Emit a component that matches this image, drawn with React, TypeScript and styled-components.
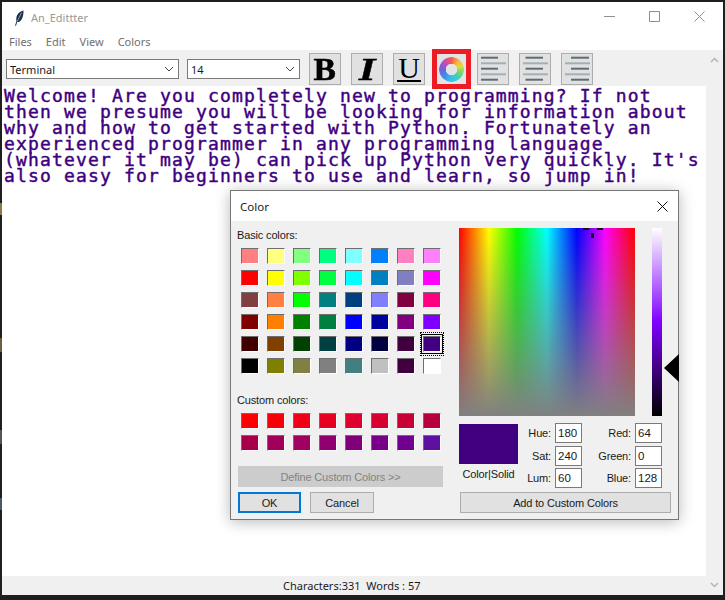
import React from "react";
import styled, { createGlobalStyle } from "styled-components";

const UI_FONT = `"Noto Sans", "Liberation Sans", Arial, sans-serif`;
const DIALOG_FONT = `"Liberation Sans", Arial, sans-serif`;

const GlobalStyle = createGlobalStyle`
  html, body {
    margin: 0;
    padding: 0;
    background: #1f1f1f;
  }
  body {
    font-family: ${UI_FONT};
    font-size: 11px;
    color: #1a1a1a;
  }
`;

const Frame = styled.div`
  position: relative;
  box-sizing: border-box;
  width: 725px;
  height: 600px;
  padding: 2px 2px 5px 2px;
  display: flex;
  flex-direction: column;
  background-color: #1f1f1f;
  background-image: linear-gradient(
    to bottom,
    transparent 203px,
    #8a7a4a 203px,
    #8a7a4a 215px,
    transparent 215px,
    transparent 338px,
    #6a5f3f 338px,
    #6a5f3f 352px,
    transparent 352px,
    transparent 430px,
    #555 430px,
    #555 444px,
    transparent 444px,
    transparent 498px,
    #46586a 498px,
    #46586a 510px,
    transparent 510px
  );
  background-size: 2px 100%;
  background-repeat: no-repeat;
  overflow: hidden;
`;

const TitleBar = styled.div`
  height: 31px;
  display: flex;
  align-items: center;
  background: #fff;
  padding-left: 11px;
  flex: none;
`;

const TitleText = styled.span`
  margin-left: 6px;
  font-size: 11px;
  color: #999;
`;

const WindowButtons = styled.div`
  margin: -2px 18px 0 auto;
  display: flex;
  align-items: center;
  gap: 34px;
  color: #8f8f8f;
`;

const MenuBar = styled.div`
  height: 17px;
  display: flex;
  align-items: center;
  padding-left: 7px;
  gap: 14px;
  background: #fff;
  color: #6f6f6f;
  font-size: 11px;
  flex: none;
`;

const Workspace = styled.div`
  flex: 1;
  display: flex;
  min-height: 0;
`;

const EditorColumn = styled.div`
  flex: 1;
  display: flex;
  flex-direction: column;
  min-width: 0;
`;

const Toolbar = styled.div`
  position: relative;
  z-index: 1;
  height: 36px;
  box-sizing: border-box;
  padding: 3px 0 0 4px;
  display: flex;
  align-items: flex-start;
  background: #f0f0f0;
  flex: none;
`;

const Combo = styled.div<{ $width: number; $gap: number }>`
  box-sizing: border-box;
  width: ${(p) => p.$width}px;
  height: 20px;
  margin: 6px ${(p) => p.$gap}px 0 0;
  padding: 0 4px 0 3px;
  display: flex;
  align-items: center;
  justify-content: space-between;
  background: #fff;
  border: 1px solid #7a7a7a;
  font-size: 11px;
`;

const ToolButton = styled.div<{ $gap?: number }>`
  box-sizing: border-box;
  width: 32px;
  height: 32px;
  margin-right: ${(p) => p.$gap ?? 10}px;
  display: flex;
  align-items: center;
  justify-content: center;
  background: #e1e1e1;
  border: 1px solid #adadad;
  color: #000;
  font-family: "Liberation Serif", "Times New Roman", serif;
  flex: none;
`;

const BoldGlyph = styled.span`
  font-size: 32px;
  font-weight: 700;
  line-height: 30px;
  -webkit-text-stroke: 0.5px #000;
  transform: scaleX(1.05);
`;

const ItalicGlyph = styled.span`
  font-size: 32px;
  font-weight: 700;
  font-style: italic;
  line-height: 30px;
  -webkit-text-stroke: 0.4px #000;
  transform: scaleX(1.35);
`;

const UnderlineGlyph = styled.span`
  font-size: 30px;
  line-height: 24px;
  padding: 0 1px;
  margin-top: -1px;
  border-bottom: 2px solid #000;
  height: 24px;
`;

const ColorButton = styled.div`
  box-sizing: border-box;
  width: 39px;
  height: 40px;
  margin: -4px 6px 0 -3px;
  display: flex;
  align-items: center;
  justify-content: center;
  background: #e1e3e4;
  border: 5px solid #ed1c24;
  flex: none;
`;

const ColorRing = styled.span`
  width: 25px;
  height: 25px;
  border-radius: 50%;
  background: conic-gradient(
    #f45a4a 0deg,
    #fbb53a 40deg,
    #d8dc3e 70deg,
    #7dd66a 105deg,
    #3fd0b8 140deg,
    #36bff0 185deg,
    #3f8fe8 225deg,
    #6c63d8 270deg,
    #c04cc0 315deg,
    #f45a4a 360deg
  );
  -webkit-mask: radial-gradient(circle, transparent 5.5px, #000 6px);
  mask: radial-gradient(circle, transparent 5.5px, #000 6px);
`;

const Editor = styled.div`
  flex: 1;
  box-sizing: border-box;
  padding: 2px 0 0 2px;
  background: #fff;
  color: #400080;
  font-family: "DejaVu Sans Mono", "Liberation Mono", monospace;
  font-size: 18px;
  font-weight: 400;
  letter-spacing: 1.16px;
  -webkit-text-stroke: 0.45px #400080;
  line-height: 16px;
  white-space: pre;
  overflow: hidden;
`;

const StatusBar = styled.div`
  height: 19px;
  box-sizing: border-box;
  padding-left: 281px;
  display: flex;
  align-items: center;
  background: #f0f0f0;
  font-size: 11px;
  white-space: pre;
  flex: none;
`;

const Scrollbar = styled.div`
  width: 17px;
  display: flex;
  flex-direction: column;
  align-items: center;
  justify-content: space-between;
  padding: 7px 0;
  background: #f0f0f0;
  color: #b4b4b4;
  flex: none;
`;

const Dialog = styled.div`
  position: absolute;
  left: 230px;
  top: 190px;
  box-sizing: border-box;
  width: 449px;
  height: 330px;
  background: #f0f0f0;
  border: 1px solid #767676;
  box-shadow: 0 2px 14px rgba(0, 0, 0, 0.28);
  color: #1a1a1a;
  font-family: ${DIALOG_FONT};
  letter-spacing: -0.15px;
`;

const DialogTitle = styled.div`
  height: 30px;
  box-sizing: border-box;
  padding: 0 10px 0 9px;
  display: flex;
  align-items: center;
  justify-content: space-between;
  background: #fff;
  font-family: ${UI_FONT};
  font-size: 11.5px;
  letter-spacing: 0;
  color: #222;
`;

const DialogBody = styled.div`
  display: flex;
  gap: 16px;
  padding: 7px 0 0 6px;
`;

const LeftColumn = styled.div`
  width: 206px;
  display: flex;
  flex-direction: column;
`;

const GroupLabel = styled.div<{ $top?: number }>`
  height: 14px;
  margin-top: ${(p) => p.$top ?? 0}px;
  line-height: 14px;
  font-size: 11px;
`;

const SwatchGrid = styled.div`
  margin-top: 6px;
  padding-left: 4px;
  display: grid;
  grid-template-columns: repeat(8, 18px);
  grid-auto-rows: 16px;
  column-gap: 8px;
  row-gap: 6px;
`;

const Swatch = styled.div<{ $color: string; $selected?: boolean }>`
  position: relative;
  box-sizing: border-box;
  background: ${(p) => p.$color};
  border-style: solid;
  border-width: 1px;
  border-color: #6e6e6e #fff #fff #6e6e6e;
  ${(p) =>
    p.$selected
      ? `outline: 1px solid #000; outline-offset: 1px;
         &::after {
           content: "";
           position: absolute;
           inset: -5px -4px;
           border: 1px dotted #000;
         }`
      : ""}
`;

const DialogButton = styled.div<{
  $width?: number;
  $disabled?: boolean;
  $primary?: boolean;
}>`
  box-sizing: border-box;
  width: ${(p) => (p.$width ? `${p.$width}px` : "100%")};
  height: 21px;
  display: flex;
  align-items: center;
  justify-content: center;
  font-size: 11px;
  background: ${(p) => (p.$disabled ? "#cccccc" : "#e1e1e1")};
  color: ${(p) => (p.$disabled ? "#838383" : "#1a1a1a")};
  border: ${(p) =>
    p.$primary
      ? "2px solid #0078d7"
      : p.$disabled
        ? "1px solid #cccccc"
        : "1px solid #adadad"};
`;

const DefineRow = styled.div`
  margin: 15px 0 5px 1px;
`;

const ActionRow = styled.div`
  display: flex;
  gap: 9px;
  margin-left: 1px;
`;

const RightColumn = styled.div`
  width: 212px;
  display: flex;
  flex-direction: column;
`;

const PickerRow = styled.div`
  display: flex;
  gap: 17px;
`;

const Spectrum = styled.div`
  position: relative;
  width: 176px;
  height: 188px;
  background:
    linear-gradient(to bottom, rgba(128, 128, 128, 0), #808080),
    linear-gradient(
      to right,
      #ff0000 0%,
      #ffff00 17%,
      #00ff00 33%,
      #00ffff 50%,
      #0000ff 67%,
      #ff00ff 83%,
      #ff0000 100%
    );
`;

const Crosshair = styled.svg`
  position: absolute;
  left: 124px;
  top: -1px;
`;

const LumBar = styled.div`
  position: relative;
  width: 10px;
  height: 188px;
  background: linear-gradient(to bottom, #ffffff 0%, #8000ff 50%, #400080 75%, #000000 100%);
`;

const LumArrow = styled.svg`
  position: absolute;
  left: 12px;
  top: 126px;
`;

const ValueRow = styled.div`
  display: grid;
  grid-template-columns: 59px 37px 27px 53px 27px;
  grid-template-rows: repeat(3, 20px);
  row-gap: 2.5px;
  margin-top: 7px;
  align-items: center;
`;

const PreviewCell = styled.div`
  grid-row: 1 / span 3;
  grid-column: 1;
  display: flex;
  flex-direction: column;
  align-items: center;
  align-self: start;
  padding-top: 1px;
`;

const Preview = styled.div`
  width: 59px;
  height: 40px;
  background: #400080;
`;

const PreviewLabel = styled.div`
  margin-top: 2px;
  font-size: 11px;
  line-height: 16px;
  white-space: nowrap;
`;

const FieldLabel = styled.label`
  padding-right: 4px;
  text-align: right;
  font-size: 11px;
  white-space: nowrap;
`;

const FieldInput = styled.input`
  box-sizing: border-box;
  width: 27px;
  height: 20px;
  padding: 0 2px;
  border: 1px solid #7a7a7a;
  border-radius: 0;
  background: #fff;
  color: #1a1a1a;
  font-family: ${DIALOG_FONT};
  font-size: 11.5px;
  outline: none;
`;

const AddRow = styled.div`
  margin: 4px 0 0 1px;
`;

const basicColors = [
  "#ff8080", "#ffff80", "#80ff80", "#00ff80", "#80ffff", "#0080ff", "#ff80c0", "#ff80ff",
  "#ff0000", "#ffff00", "#80ff00", "#00ff40", "#00ffff", "#0080c0", "#8080c0", "#ff00ff",
  "#804040", "#ff8040", "#00ff00", "#008080", "#004080", "#8080ff", "#800040", "#ff0080",
  "#800000", "#ff8000", "#008000", "#008040", "#0000ff", "#0000a0", "#800080", "#8000ff",
  "#400000", "#804000", "#004000", "#004040", "#000080", "#000040", "#400040", "#400080",
  "#000000", "#808000", "#808040", "#808080", "#408080", "#c0c0c0", "#400040", "#ffffff",
];

const customColors = [
  "#ff0000", "#f80008", "#f00018", "#e80020", "#e00030", "#d80030", "#c80038", "#b80040",
  "#a80048", "#a00058", "#a00060", "#900070", "#800078", "#780088", "#700090", "#6010a0",
];

const editorText = `Welcome! Are you completely new to programming? If not
then we presume you will be looking for information about
why and how to get started with Python. Fortunately an
experienced programmer in any programming language
(whatever it may be) can pick up Python very quickly. It's
also easy for beginners to use and learn, so jump in!`;

const Chevron = () => (
  <svg width="10" height="6" viewBox="0 0 10 6" fill="none" stroke="#444" strokeWidth="1">
    <path d="M1 1l4 4 4-4" />
  </svg>
);

const Feather = () => (
  <svg width="12" height="16" viewBox="0 0 12 16">
    <path d="M10.5 0.5C7.5 1 4.6 3 3.6 6.5c-.4 1.6-.5 3.4-.2 4.9L2 15.4l1 .3 1.2-3.6c2 .1 3.7-1 4.9-3.6 1-2.3 1.5-5.3 1.4-8z" fill="#1a2f4a" />
    <path d="M8.6 2.6L4.2 11.4" stroke="#a9bed2" strokeWidth=".8" />
  </svg>
);

type AlignKind = "left" | "center" | "right";

const AlignIcon = ({ kind }: { kind: AlignKind }) => {
  const shortLine = { left: [3, 20], center: [5.5, 23], right: [9, 27] }[kind];
  const longLine = [3, 28];
  return (
    <svg width="30" height="30" viewBox="0 0 30 30" strokeWidth="2">
      {[3.7, 14.7, 25.7].map((y) => (
        <path key={y} d={`M${shortLine[0]} ${y}H${shortLine[1]}`} stroke="#5d6d75" />
      ))}
      {[9.3, 20.3].map((y) => (
        <path key={y} d={`M${longLine[0]} ${y}H${longLine[1]}`} stroke="#a3afb6" />
      ))}
    </svg>
  );
};

export default function App() {
  return (
    <>
      <GlobalStyle />
      <Frame>
        <TitleBar>
          <Feather />
          <TitleText>An_Edittter</TitleText>
          <WindowButtons>
            <svg width="11" height="11" viewBox="0 0 11 11" stroke="currentColor" fill="none">
              <path d="M0 5.5h11" />
            </svg>
            <svg width="11" height="11" viewBox="0 0 11 11" stroke="currentColor" fill="none">
              <path d="M.5.5h10v10H.5z" />
            </svg>
            <svg width="11" height="11" viewBox="0 0 11 11" stroke="currentColor" fill="none">
              <path d="M.5.5l10 10M10.5.5l-10 10" />
            </svg>
          </WindowButtons>
        </TitleBar>
        <MenuBar>
          <span>Files</span>
          <span>Edit</span>
          <span>View</span>
          <span>Colors</span>
        </MenuBar>
        <Workspace>
          <EditorColumn>
            <Toolbar>
              <Combo $width={173} $gap={8}>
                Terminal
                <Chevron />
              </Combo>
              <Combo $width={113} $gap={9}>
                14
                <Chevron />
              </Combo>
              <ToolButton>
                <BoldGlyph>B</BoldGlyph>
              </ToolButton>
              <ToolButton>
                <ItalicGlyph>I</ItalicGlyph>
              </ToolButton>
              <ToolButton>
                <UnderlineGlyph>U</UnderlineGlyph>
              </ToolButton>
              <ColorButton>
                <ColorRing />
              </ColorButton>
              <ToolButton>
                <AlignIcon kind="left" />
              </ToolButton>
              <ToolButton>
                <AlignIcon kind="center" />
              </ToolButton>
              <ToolButton>
                <AlignIcon kind="right" />
              </ToolButton>
            </Toolbar>
            <Editor>{editorText}</Editor>
            <StatusBar>Characters:331  Words : 57</StatusBar>
          </EditorColumn>
          <Scrollbar>
            <svg width="9" height="6" viewBox="0 0 9 6" fill="none" stroke="currentColor" strokeWidth="1.5">
              <path d="M1 5l3.5-3.5L8 5" />
            </svg>
            <svg width="9" height="6" viewBox="0 0 9 6" fill="none" stroke="currentColor" strokeWidth="1.5">
              <path d="M1 1l3.5 3.5L8 1" />
            </svg>
          </Scrollbar>
        </Workspace>

        <Dialog>
          <DialogTitle>
            Color
            <svg width="11" height="11" viewBox="0 0 11 11" stroke="#111" fill="none">
              <path d="M.5.5l10 10M10.5.5l-10 10" />
            </svg>
          </DialogTitle>
          <DialogBody>
            <LeftColumn>
              <GroupLabel>Basic colors:</GroupLabel>
              <SwatchGrid>
                {basicColors.map((c, i) => (
                  <Swatch key={i} $color={c} $selected={i === 39} />
                ))}
              </SwatchGrid>
              <GroupLabel $top={19}>Custom colors:</GroupLabel>
              <SwatchGrid>
                {customColors.map((c, i) => (
                  <Swatch key={i} $color={c} />
                ))}
              </SwatchGrid>
              <DefineRow>
                <DialogButton $disabled>Define Custom Colors &gt;&gt;</DialogButton>
              </DefineRow>
              <ActionRow>
                <DialogButton $width={63} $primary>
                  OK
                </DialogButton>
                <DialogButton $width={64}>Cancel</DialogButton>
              </ActionRow>
            </LeftColumn>
            <RightColumn>
              <PickerRow>
                <Spectrum>
                  <Crosshair width="24" height="12" viewBox="0 0 24 12" fill="#111">
                    <rect x="0" y="1" width="6" height="2" />
                    <rect x="14" y="1" width="6" height="2" />
                    <rect x="8" y="6" width="3" height="5" />
                  </Crosshair>
                </Spectrum>
                <LumBar>
                  <LumArrow width="15" height="28" viewBox="0 0 15 28" fill="#000">
                    <path d="M0 14L15 0v28z" />
                  </LumArrow>
                </LumBar>
              </PickerRow>
              <ValueRow>
                <PreviewCell>
                  <Preview />
                  <PreviewLabel>Color|Solid</PreviewLabel>
                </PreviewCell>
                <FieldLabel>Hue:</FieldLabel>
                <FieldInput readOnly value="180" />
                <FieldLabel>Red:</FieldLabel>
                <FieldInput readOnly value="64" />
                <FieldLabel>Sat:</FieldLabel>
                <FieldInput readOnly value="240" />
                <FieldLabel>Green:</FieldLabel>
                <FieldInput readOnly value="0" />
                <FieldLabel>Lum:</FieldLabel>
                <FieldInput readOnly value="60" />
                <FieldLabel>Blue:</FieldLabel>
                <FieldInput readOnly value="128" />
              </ValueRow>
              <AddRow>
                <DialogButton $width={211}>Add to Custom Colors</DialogButton>
              </AddRow>
            </RightColumn>
          </DialogBody>
        </Dialog>
      </Frame>
    </>
  );
}
